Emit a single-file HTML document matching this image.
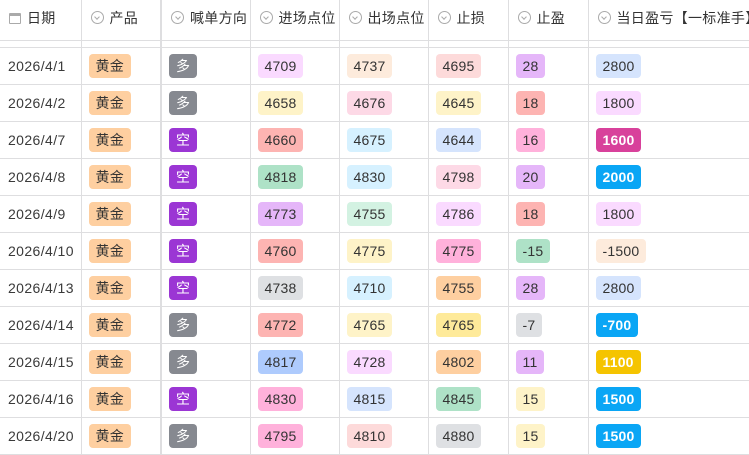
<!DOCTYPE html>
<html><head><meta charset="utf-8"><style>
*{margin:0;padding:0;box-sizing:border-box}
body{width:749px;height:455px;overflow:hidden;background:#fff;font-family:"Liberation Sans","Noto Sans CJK SC",sans-serif;font-size:14px;color:#333}
table{border-collapse:collapse;table-layout:fixed;width:749px}
td{border-bottom:1px solid #dedee0;border-right:1px solid #dedee0;padding:0 0 0 7px;white-space:nowrap;overflow:hidden;vertical-align:middle}
tr.h td{height:40px;color:#333;padding-left:9px;padding-bottom:3px;letter-spacing:0.3px}
tr.s td{height:7px}
tr.r td{height:37px}
tr.r td:first-child{padding-left:8px;letter-spacing:0.4px;color:#3a3a3a}
td.c2{border-right:2px solid #dedee0}
.t{display:inline-block;height:24px;line-height:24px;padding:0 7px;border-radius:4px;color:#333;letter-spacing:0.2px}
.w{color:#fff}.b{color:#fff;font-weight:bold}
.ic{display:inline-block;width:13px;height:13px;border:1px solid #aaa;border-radius:50%;vertical-align:-1px;margin-right:6px;position:relative}
.ic:after{content:"";position:absolute;left:3.5px;top:2.5px;width:3px;height:3px;border-right:1px solid #aaa;border-bottom:1px solid #aaa;transform:rotate(45deg)}
.cal{display:inline-block;width:12px;height:11px;border:1px solid #aaa;border-radius:1px;border-top-width:3px;vertical-align:-1px;margin-right:6px}
</style></head><body>
<table>
<colgroup><col style="width:81px"><col style="width:80px"><col style="width:89px"><col style="width:89px"><col style="width:89px"><col style="width:80px"><col style="width:80px"><col style="width:161px"></colgroup>
<tr class="h"><td><span class="cal"></span>日期</td><td class="c2"><span class="ic"></span>产品</td><td><span class="ic"></span>喊单方向</td><td><span class="ic"></span>进场点位</td><td><span class="ic"></span>出场点位</td><td><span class="ic"></span>止损</td><td><span class="ic"></span>止盈</td><td><span class="ic"></span>当日盈亏【一标准手】</td></tr>
<tr class="s"><td></td><td class="c2"></td><td></td><td></td><td></td><td></td><td></td><td></td></tr>
<tr class="r"><td>2026/4/1</td><td class="c2"><span class="t" style="background:#fecfa0">黄金</span></td><td><span class="t w" style="background:#868990">多</span></td><td><span class="t" style="background:#fadaff">4709</span></td><td><span class="t" style="background:#fdebdc">4737</span></td><td><span class="t" style="background:#fddada">4695</span></td><td><span class="t" style="background:#e5b6f9">28</span></td><td><span class="t" style="background:#d5e4fd">2800</span></td></tr>
<tr class="r"><td>2026/4/2</td><td class="c2"><span class="t" style="background:#fecfa0">黄金</span></td><td><span class="t w" style="background:#868990">多</span></td><td><span class="t" style="background:#fef3c8">4658</span></td><td><span class="t" style="background:#fdd9e6">4676</span></td><td><span class="t" style="background:#fef3c8">4645</span></td><td><span class="t" style="background:#fdb4b2">18</span></td><td><span class="t" style="background:#fadaff">1800</span></td></tr>
<tr class="r"><td>2026/4/7</td><td class="c2"><span class="t" style="background:#fecfa0">黄金</span></td><td><span class="t w" style="background:#9b36d4">空</span></td><td><span class="t" style="background:#fdb4b2">4660</span></td><td><span class="t" style="background:#d6f1ff">4675</span></td><td><span class="t" style="background:#d5e4fd">4644</span></td><td><span class="t" style="background:#ffb1db">16</span></td><td><span class="t b" style="background:#d8419b">1600</span></td></tr>
<tr class="r"><td>2026/4/8</td><td class="c2"><span class="t" style="background:#fecfa0">黄金</span></td><td><span class="t w" style="background:#9b36d4">空</span></td><td><span class="t" style="background:#aee2c7">4818</span></td><td><span class="t" style="background:#d6f1ff">4830</span></td><td><span class="t" style="background:#fdd9e6">4798</span></td><td><span class="t" style="background:#e5b6f9">20</span></td><td><span class="t b" style="background:#0aa6f5">2000</span></td></tr>
<tr class="r"><td>2026/4/9</td><td class="c2"><span class="t" style="background:#fecfa0">黄金</span></td><td><span class="t w" style="background:#9b36d4">空</span></td><td><span class="t" style="background:#e5b6f9">4773</span></td><td><span class="t" style="background:#d3f2e2">4755</span></td><td><span class="t" style="background:#fadaff">4786</span></td><td><span class="t" style="background:#fdb4b2">18</span></td><td><span class="t" style="background:#fadaff">1800</span></td></tr>
<tr class="r"><td>2026/4/10</td><td class="c2"><span class="t" style="background:#fecfa0">黄金</span></td><td><span class="t w" style="background:#9b36d4">空</span></td><td><span class="t" style="background:#fdb4b2">4760</span></td><td><span class="t" style="background:#fef3c8">4775</span></td><td><span class="t" style="background:#ffb1db">4775</span></td><td><span class="t" style="background:#aee2c7">-15</span></td><td><span class="t" style="background:#fdebdc">-1500</span></td></tr>
<tr class="r"><td>2026/4/13</td><td class="c2"><span class="t" style="background:#fecfa0">黄金</span></td><td><span class="t w" style="background:#9b36d4">空</span></td><td><span class="t" style="background:#dee0e3">4738</span></td><td><span class="t" style="background:#d6f1ff">4710</span></td><td><span class="t" style="background:#fecfa0">4755</span></td><td><span class="t" style="background:#e5b6f9">28</span></td><td><span class="t" style="background:#d5e4fd">2800</span></td></tr>
<tr class="r"><td>2026/4/14</td><td class="c2"><span class="t" style="background:#fecfa0">黄金</span></td><td><span class="t w" style="background:#868990">多</span></td><td><span class="t" style="background:#fdb4b2">4772</span></td><td><span class="t" style="background:#fef3c8">4765</span></td><td><span class="t" style="background:#feea9a">4765</span></td><td><span class="t" style="background:#dee0e3">-7</span></td><td><span class="t b" style="background:#0aa6f5">-700</span></td></tr>
<tr class="r"><td>2026/4/15</td><td class="c2"><span class="t" style="background:#fecfa0">黄金</span></td><td><span class="t w" style="background:#868990">多</span></td><td><span class="t" style="background:#aecbfd">4817</span></td><td><span class="t" style="background:#fadaff">4728</span></td><td><span class="t" style="background:#fecfa0">4802</span></td><td><span class="t" style="background:#e5b6f9">11</span></td><td><span class="t b" style="background:#f5c400">1100</span></td></tr>
<tr class="r"><td>2026/4/16</td><td class="c2"><span class="t" style="background:#fecfa0">黄金</span></td><td><span class="t w" style="background:#9b36d4">空</span></td><td><span class="t" style="background:#ffb1db">4830</span></td><td><span class="t" style="background:#d5e4fd">4815</span></td><td><span class="t" style="background:#aee2c7">4845</span></td><td><span class="t" style="background:#fef3c8">15</span></td><td><span class="t b" style="background:#0aa6f5">1500</span></td></tr>
<tr class="r"><td>2026/4/20</td><td class="c2"><span class="t" style="background:#fecfa0">黄金</span></td><td><span class="t w" style="background:#868990">多</span></td><td><span class="t" style="background:#ffb1db">4795</span></td><td><span class="t" style="background:#fddada">4810</span></td><td><span class="t" style="background:#dee0e3">4880</span></td><td><span class="t" style="background:#fef3c8">15</span></td><td><span class="t b" style="background:#0aa6f5">1500</span></td></tr>
</table>
</body></html>
